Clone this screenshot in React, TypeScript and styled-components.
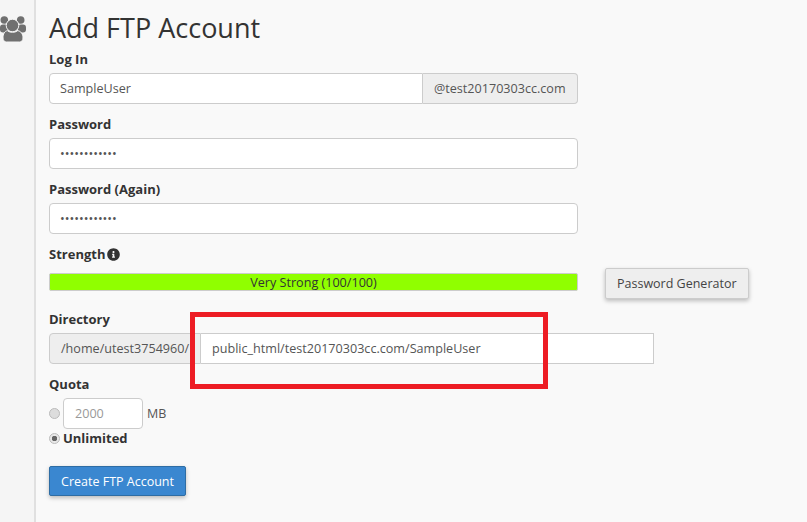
import React from "react";
import styled, { createGlobalStyle } from "styled-components";
import { FaInfoCircle } from "react-icons/fa";

const Global = createGlobalStyle`
  html, body { margin: 0; padding: 0; height: 100%; background: #f9f9f9; overflow: hidden; }
  body { font-family: "Open Sans", "Noto Sans", sans-serif; color: #333; }
  * { box-sizing: border-box; }
`;

const Page = styled.div`
  display: flex;
  width: 807px;
  height: 522px;
  overflow: hidden;
  position: relative;
  background: #f9f9f9;
`;

const Sidebar = styled.aside`
  width: 36px;
  flex: none;
  background: #f5f5f5;
  border-right: 2px solid #e0e0e0;
  padding-top: 16px;
  line-height: 0;
  overflow: hidden;
`;

const Main = styled.main`
  flex: 1;
  padding: 10px 0 0 13px;
  width: 771px;
`;

const Title = styled.h1`
  margin: 0 0 3px;
  font-size: 27px;
  line-height: 36px;
  font-weight: 400;
  color: #333;
`;

const Label = styled.label<{ $below?: number }>`
  display: flex;
  align-items: center;
  gap: 2px;
  height: 20px;
  margin-bottom: ${(p) => p.$below ?? 4}px;
  font-size: 13px;
  line-height: 20px;
  font-weight: 700;
  color: #333;
`;

const Group = styled.div<{ $gap?: number }>`
  margin-bottom: ${(p) => p.$gap ?? 10}px;
`;

const InputRow = styled.div<{ $w: number }>`
  display: flex;
  width: ${(p) => p.$w}px;
  height: 31px;
`;

const Input = styled.div<{ $attached?: "left" | "right" }>`
  flex: 1;
  min-width: 0;
  height: 100%;
  display: flex;
  align-items: center;
  padding: 0 ${(p) => (p.$attached === "left" ? 11 : 10)}px;
  background: #fff;
  border: 1px solid #ccc;
  border-radius: ${(p) =>
    p.$attached === "right" ? "4px 0 0 4px" : p.$attached === "left" ? "0" : "4px"};
  ${(p) => (p.$attached === "left" ? "border-left: 0;" : "")}
  font-size: 12.6px;
  color: #555;
  white-space: nowrap;
`;

const Addon = styled.div<{ $side: "left" | "right"; $w: number }>`
  flex: none;
  width: ${(p) => p.$w}px;
  height: 100%;
  display: flex;
  align-items: center;
  padding: 0 11px;
  background: #eee;
  border: 1px solid #ccc;
  border-radius: ${(p) => (p.$side === "right" ? "0 4px 4px 0" : "4px 0 0 4px")};
  ${(p) => (p.$side === "right" ? "border-left: 0;" : "")}
  font-size: 12.6px;
  color: #555;
  white-space: nowrap;
`;

const StrengthRow = styled.div`
  display: flex;
  align-items: flex-start;
  gap: 27px;
  height: 36px;
`;

const Meter = styled.div`
  width: 529px;
  height: 18px;
  background: #90ff00;
  border: 1px solid #ccc;
  border-radius: 2px;
  display: flex;
  align-items: center;
  justify-content: center;
  font-size: 12.6px;
  color: #333;
`;

const Button = styled.button<{ $primary?: boolean }>`
  height: ${(p) => (p.$primary ? 30 : 31)}px;
  width: ${(p) => (p.$primary ? "137px" : "auto")};
  padding: 0 ${(p) => (p.$primary ? 0 : 11)}px;
  font-family: inherit;
  font-size: 12.5px;
  border-radius: 2px;
  border: 1px solid ${(p) => (p.$primary ? "#2e6da4" : "#ccc")};
  background: ${(p) => (p.$primary ? "#3a87d0" : "#eee")};
  color: ${(p) => (p.$primary ? "#fff" : "#444")};
  box-shadow: 0 2px 4px rgba(0, 0, 0, 0.25);
`;

const GeneratorButton = styled(Button)`
  margin-top: -5px;
`;

const QuotaRow = styled.div`
  display: flex;
  align-items: center;
  height: 31px;
`;

const Radio = styled.span<{ $on?: boolean }>`
  width: 11px;
  height: 11px;
  flex: none;
  margin-right: 3px;
  border-radius: 50%;
  border: 1px solid #bbb;
  background: ${(p) =>
    p.$on ? "radial-gradient(circle, #666 0 2.5px, #e8e8e8 3px)" : "#ddd"};
`;

const QuotaInput = styled.div`
  width: 80px;
  height: 31px;
  display: flex;
  align-items: center;
  padding: 0 11px;
  background: #fff;
  border: 1px solid #ccc;
  border-radius: 4px;
  font-size: 12.6px;
  color: #999;
`;

const Unit = styled.span`
  margin-left: 4px;
  font-size: 12.5px;
  color: #555;
`;

const UnlimitedRow = styled.div`
  display: flex;
  align-items: center;
  height: 18px;
  margin: 0 0 19px;
  font-size: 13px;
  font-weight: 700;
  color: #333;
`;

const Highlight = styled.div`
  position: absolute;
  left: 190px;
  top: 312px;
  width: 358px;
  height: 77px;
  border: 5px solid #ed1c24;
`;

const UsersIcon = () => (
  <svg width="27" height="26" viewBox="0 0 27 26" fill="#707070">
    <circle cx="4.300" cy="4" r="3.800" />
    <circle cx="20.700" cy="4" r="3.800" />
    <rect x="0" y="8.500" width="8" height="8" rx="3" />
    <rect x="18" y="8.500" width="8" height="8" rx="3" />
    <circle cx="12.500" cy="9.500" r="6.300" stroke="#f5f5f5" strokeWidth="1" />
    <path
      d="M7.500 14.700C9 16.700 16 16.700 17.500 14.700C21 15 23 18 23 22C23 24.500 21.500 26 19.500 26H6.500C4.500 26 3 24.500 3 22C3 18 4.500 15 7.500 14.700Z"
      stroke="#f5f5f5"
      strokeWidth="1"
    />
  </svg>
);

export default function App() {
  return (
    <Page>
      <Global />
      <Sidebar>
        <UsersIcon />
      </Sidebar>
      <Main>
        <Title>Add FTP Account</Title>
        <Group>
          <Label>Log In</Label>
          <InputRow $w={529}>
            <Input $attached="right">SampleUser</Input>
            <Addon $side="right" $w={155}>@test20170303cc.com</Addon>
          </InputRow>
        </Group>
        <Group>
          <Label>Password</Label>
          <InputRow $w={529}>
            <Input>••••••••••••</Input>
          </InputRow>
        </Group>
        <Group>
          <Label>Password (Again)</Label>
          <InputRow $w={529}>
            <Input>••••••••••••</Input>
          </InputRow>
        </Group>
        <Group $gap={0}>
          <Label $below={9}>
            Strength <FaInfoCircle size={13} />
          </Label>
          <StrengthRow>
            <Meter>Very Strong (100/100)</Meter>
            <GeneratorButton>Password Generator</GeneratorButton>
          </StrengthRow>
        </Group>
        <Group>
          <Label>Directory</Label>
          <InputRow $w={605}>
            <Addon $side="left" $w={152}>/home/utest3754960/</Addon>
            <Input $attached="left">public_html/test20170303cc.com/SampleUser</Input>
          </InputRow>
        </Group>
        <Group $gap={0}>
          <Label>Quota</Label>
          <QuotaRow>
            <Radio />
            <QuotaInput>2000</QuotaInput>
            <Unit>MB</Unit>
          </QuotaRow>
          <UnlimitedRow>
            <Radio $on />
            Unlimited
          </UnlimitedRow>
        </Group>
        <Button $primary>Create FTP Account</Button>
      </Main>
      <Highlight />
    </Page>
  );
}
